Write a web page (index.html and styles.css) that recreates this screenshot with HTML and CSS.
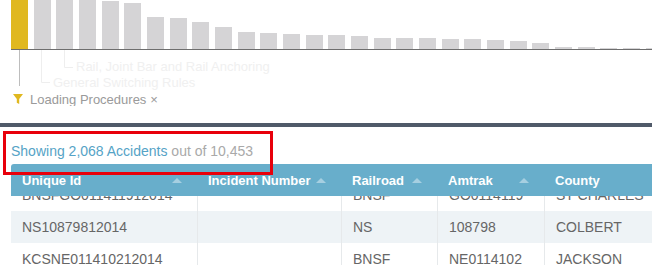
FILE: index.html
```html
<!DOCTYPE html>
<html>
<head>
<meta charset="utf-8">
<link rel="stylesheet" href="styles.css">
</head>
<body>
<div class="page">
  <div class="chart">
    <div class="bars">
      <div class="bar active" style="height:49px"></div>
      <div class="bar" style="height:49px"></div>
      <div class="bar" style="height:49px"></div>
      <div class="bar" style="height:49px"></div>
      <div class="bar" style="height:48px"></div>
      <div class="bar" style="height:46px"></div>
      <div class="bar" style="height:32px"></div>
      <div class="bar" style="height:31px"></div>
      <div class="bar" style="height:27px"></div>
      <div class="bar" style="height:22px"></div>
      <div class="bar" style="height:17px"></div>
      <div class="bar" style="height:16px"></div>
      <div class="bar" style="height:15px"></div>
      <div class="bar" style="height:14px"></div>
      <div class="bar" style="height:14px"></div>
      <div class="bar" style="height:13px"></div>
      <div class="bar" style="height:11px"></div>
      <div class="bar" style="height:11px"></div>
      <div class="bar" style="height:11px"></div>
      <div class="bar" style="height:10px"></div>
      <div class="bar" style="height:10px"></div>
      <div class="bar" style="height:9px"></div>
      <div class="bar" style="height:8px"></div>
      <div class="bar" style="height:6px"></div>
      <div class="bar" style="height:2px"></div>
      <div class="bar" style="height:2px"></div>
      <div class="bar" style="height:1px"></div>
      <div class="bar" style="height:1px"></div>
      <div class="bar" style="height:1px"></div>
    </div>
    <div class="annotations">
      <svg class="leaders" width="120" height="42" viewBox="0 0 120 42">
        <line x1="19.5" y1="0" x2="19.5" y2="36" stroke="#bdbdbd" stroke-width="1"/>
        <polyline points="41.5,0 41.5,32.5 50,32.5" fill="none" stroke="#eeeeee" stroke-width="1"/>
        <polyline points="64.5,0 64.5,17.5 73,17.5" fill="none" stroke="#eeeeee" stroke-width="1"/>
      </svg>
      <span class="label label-rail">Rail, Joint Bar and Rail Anchoring</span>
      <span class="label label-switch">General Switching Rules</span>
    </div>
    <div class="filter">
      <svg class="funnel" width="10" height="10" viewBox="0 0 10 10"><path d="M0 0 H10 L6.2 5 V10 L3.8 8.8 V5 Z" fill="#e0b820"/></svg>
      <span class="filter-text">Loading Procedures</span>
      <span class="filter-x">×</span>
    </div>
  </div>

  <div class="divider"></div>

  <div class="summary"><span class="count">Showing 2,068 Accidents</span> <span class="total">out of 10,453</span></div>
  <div class="highlight"></div>

  <div class="table">
    <div class="row head">
      <div class="cell">Unique Id<span class="sort"></span></div>
      <div class="cell">Incident Number<span class="sort"></span></div>
      <div class="cell">Railroad<span class="sort"></span></div>
      <div class="cell">Amtrak<span class="sort"></span></div>
      <div class="cell">County</div>
    </div>
    <div class="viewport">
      <div class="rows">
        <div class="row">
          <div class="cell">BNSFGO011411912014</div>
          <div class="cell"></div>
          <div class="cell">BNSF</div>
          <div class="cell">GO0114119</div>
          <div class="cell">ST CHARLES</div>
        </div>
        <div class="row alt">
          <div class="cell">NS10879812014</div>
          <div class="cell"></div>
          <div class="cell">NS</div>
          <div class="cell">108798</div>
          <div class="cell">COLBERT</div>
        </div>
        <div class="row">
          <div class="cell">KCSNE011410212014</div>
          <div class="cell"></div>
          <div class="cell">BNSF</div>
          <div class="cell">NE0114102</div>
          <div class="cell">JACKSON</div>
        </div>
      </div>
    </div>
  </div>
</div>
</body>
</html>
```

FILE: styles.css
```css
html, body {
  margin: 0;
  padding: 0;
  overflow: hidden;
  background: #ffffff;
}
body {
  font-family: "Liberation Sans", Arial, sans-serif;
  width: 652px;
  height: 265px;
}
.page {
  position: relative;
  width: 652px;
  height: 265px;
  overflow: hidden;
}
.chart {
  overflow: hidden;
}
.bars {
  display: flex;
  align-items: flex-end;
  gap: 5.68px;
  height: 49px;
  margin-left: 11px;
  border-bottom: 1px solid #6e6e6e;
  width: 700px;
}
.bar {
  flex: 0 0 17px;
  width: 17px;
  background: #d5d4d6;
}
.bar.active {
  background: #e0b820;
}
.annotations {
  position: relative;
  height: 42px;
}
.leaders {
  position: absolute;
  left: 0;
  top: 0;
}
.label {
  position: absolute;
  font-size: 13px;
  line-height: 15px;
  color: #f0f0f0;
  white-space: nowrap;
}
.label-rail {
  left: 76px;
  top: 9px;
}
.label-switch {
  left: 53px;
  top: 25px;
}
.filter {
  display: flex;
  align-items: center;
  height: 14px;
  padding-left: 13px;
  color: #9a9a9a;
  font-size: 13px;
}
.funnel {
  display: block;
  margin-right: 7px;
}
.filter-x {
  margin-left: 4px;
  font-size: 13px;
}
.divider {
  margin-top: 17px;
  height: 4px;
  background: #505a69;
}
.summary {
  margin-top: 16px;
  margin-left: 11px;
  font-size: 14px;
  line-height: 16px;
  height: 16px;
  white-space: nowrap;
}
.count {
  color: #55a3c6;
}
.total {
  color: #a9a9a9;
}
.highlight {
  position: absolute;
  left: 3px;
  top: 131px;
  width: 264px;
  height: 38px;
  border: 3px solid #e8000b;
  z-index: 5;
}
.table {
  margin-top: 5px;
  margin-left: 11px;
  width: 760px;
}
.row {
  display: grid;
  grid-template-columns: 186px 144px 96px 107px 227px;
  height: 32px;
  background: #ffffff;
}
.row.alt {
  background: #eef3f6;
}
.cell {
  position: relative;
  display: flex;
  align-items: center;
  padding-left: 11px;
  font-size: 14px;
  color: #666666;
  white-space: nowrap;
  border-left: 1px solid #e6e9eb;
}
.row .cell:first-child {
  border-left: none;
}
.head {
  position: relative;
  z-index: 2;
  background: #68aecb;
  border-radius: 3px 3px 0 0;
}
.head .cell {
  color: #ffffff;
  font-weight: bold;
  font-size: 13px;
  border-left: none;
}
.sort {
  position: absolute;
  right: 15px;
  top: 14px;
  width: 0;
  height: 0;
  border-left: 5px solid transparent;
  border-right: 5px solid transparent;
  border-bottom: 5px solid #a6cfe1;
}
.viewport {
  height: 80px;
  overflow: hidden;
}
.rows {
  margin-top: -17px;
}
```
